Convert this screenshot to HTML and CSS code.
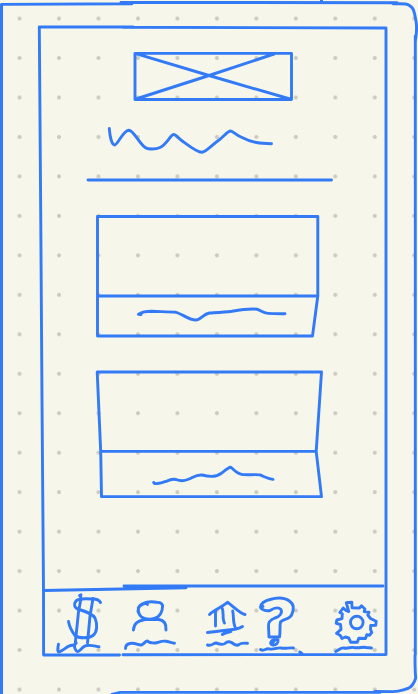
FILE: index.html
```html
<!DOCTYPE html>
<html lang="en">
<head>
<meta charset="utf-8">
<title>Wireframe</title>
<link rel="stylesheet" href="styles.css">
</head>
<body>
<main class="board">
  <svg class="frame" viewBox="0 0 418 694" aria-hidden="true">
    <path class="edge" d="M1.5 4.5V694"/>
    <path d="M2 4.4L132 3.8M121 2.4L397 2.7M321.500 0V1.500M393 3.800C399 3.800 403 3.600 405.500 4C409 4.500 412 7 413.500 10C414.500 13 415.300 16.700 416 21C417.500 30 416 36 415.300 41.700M415.300 36V655M415 655C415 663 415 672 415.700 678C414 684 411 687 408 688.500C402 690 400 691.500 393 691.600L375 691.500M380 692.400H120L112 694.500"/>
    <path d="M39.300 27H133M123 27.200L386 28V654.500L123 654.800M119.500 655H43.600L43.500 590L42 400L40.700 210L39.300 27"/>
  </svg>

  <section class="screen">
    <svg class="logo" viewBox="133 51 161 51" role="img" aria-label="Image placeholder">
      <path d="M135 53.400H291.500V99.500H135ZM135 53.400L209 75.500L290 99M136 99L209 75.500L274 54"/>
    </svg>
    <svg class="title" viewBox="107 127 167 28" role="img" aria-label="Heading">
      <path d="M109.300 128.500C109.800 135 111.500 144.500 114.500 145C118 145 123 130 129 130.200C134 131 139 143 145 147.300C148 149.700 156 149.500 160 147.500C166 145 171 134.500 173.500 134.500C176 134.500 178 138 181 140C188 145 197 152.500 202 152.300C207 151.500 213 144 219 140C224 136 228 131 230.500 131C233 131 236 135 241 137C252 143 261 143.500 271.500 143.700"/>
    </svg>
    <svg class="divider" viewBox="86 178 247 4" aria-hidden="true"><path d="M88 180H331.500"/></svg>

    <svg class="card" viewBox="95 214 226 124" role="img" aria-label="Card">
      <path d="M97.500 216.500H317.800V296L312.500 336H97.500ZM97.500 296H317.800"/>
      <path d="M138.500 314.300L141 314.600M139 314C142 312 147 311.300 152 311.300C160 311.700 169 311.700 176 312.300C182 313.500 188 320 196 320C201 320 203 314 209.500 313C218 312.500 224 312.300 232 311.200C242 309.500 250 308.500 257 309.200C261 310.500 263 313.300 268 313.400C274 313.800 279 313.700 285 313.700"/>
    </svg>
    <svg class="card card-second" viewBox="95 370 229 129" role="img" aria-label="Card">
      <path d="M97.200 372H321.500L316.200 451.400L321.500 496.600H101.500L100.700 451.400ZM100.700 451.400H316.200"/>
      <path d="M153.700 482.500C154 484.500 160 483.500 165 481.700C169 480.500 172 478.200 176 479.500C180 481 185 481 189 479C193 477.500 196 474.500 202 475C208 476.500 216 477.500 221 473.500C225 471 228 467.500 230.300 467.200C233 468 236 474 243 474.600C249 475 256 474.300 260 474.900C265 477 268 478.800 273 479.400"/>
    </svg>
  </section>

  <nav class="tabs">
    <svg class="tabs-line" viewBox="43 584 343 8" aria-hidden="true"><path d="M43.500 590.500L186 587.700M124 586H383"/></svg>
    <div class="tab-row">
      <svg class="tab tab-money" viewBox="56 592 46 62" role="img" aria-label="Money">
        <path d="M79.500 595.500L81 594.800M80.700 596V600L78.500 612L75.300 643M93 598.500L90 616L87.500 643"/>
        <path d="M100.500 602.500C99 599.500 96 598.800 92 599C85 598.500 78 598.500 76 601C73.500 604 74 608 79 609.500C87 612 93 614 95 618C97.500 624 97.500 632 93 635.500C89 638.500 79 638.500 75 635.500C71.500 631 69.500 627 68.500 621.500"/>
        <path d="M58.500 644.300C58 648 56.500 651.500 58.800 652C64 650.500 67 645.500 72 645.200C75 645.300 77.500 642 75.500 643C73 647 76 651.500 78 651.500C80 651.500 83 645.500 87 645.500C92 644.800 95 646.200 99 646.700"/>
      </svg>
      <svg class="tab tab-user" viewBox="123 592 54 62" role="img" aria-label="Profile">
        <path d="M147.500 604.500L147 603.300C144 603 142 604.500 139.700 606C137 610 138.500 614 141.500 617C146 619.800 153 619.800 156.500 617.500C160 616 162.500 611 162.500 607C163 604 161 602.500 157 602.200C151 601.300 146 602 143 603.500C140.500 604.500 139 606 138.300 608"/>
        <path d="M133.400 630C134 623 138 621 145 619.500L159 619.500C164.500 620.500 166.500 624 166 630"/>
        <path d="M125.500 648.500C125.500 645 128 643.700 131 643.300C135 642.500 138 645.300 141.500 645C145 643.500 145 640.800 147.500 641C149 642.800 152 643 155 643C159 642.500 161 640.500 166 641.300C169 641.800 172 643.200 174.500 643.200"/>
      </svg>
      <svg class="tab tab-bank" viewBox="205 592 44 62" role="img" aria-label="Bank">
        <path d="M209.500 614.500C214 610 223 606.500 227.500 602.300C233 606 240 613.500 245 614.500M215.500 610.500V626M222.300 608.500C224 613 222 619 224.500 623M232.700 611C234 616 232.500 622 235.500 628M207.500 632.500C219 631.500 231 629.500 236 629C238 628.500 241 627.500 242.500 626.500M222.300 634.500C225 632.500 229 632.500 231 631.500"/>
        <path d="M207.500 645C212 646.500 213 643 216 643C219 644 223 645.200 225 643.500C227 641.500 229.500 641.500 231.500 642.500C234 644.500 236.500 646.500 239 644.500C241 642.700 245 643 247.500 643.300"/>
      </svg>
      <svg class="tab tab-help" viewBox="258 592 46 62" role="img" aria-label="Help">
        <path d="M263 606.500L260.500 607.500C262 610.500 267 611 270 610.500C274 608 278 606.500 281 609.500C282.500 613 280 616.500 275 618C270 620 268 622 268.500 626L269 637H279.500C280.500 632 279.500 626 280.500 622C284 618 290 620 292 614C294 609 293.500 604 290 601.500C285 597.500 277 597.500 270 599.500C264 601 261 604 260.500 607"/>
        <path d="M274 639.500C270 641 269.500 645 273 645C276 645.300 278.500 643 278 640C276.500 638.500 274.500 640 273 642.500"/>
        <path d="M260.500 649.500C264 652 266 647.500 269.500 649C275 649.800 277 647.300 281 648C286 648.800 289 647.500 293.500 648M299.700 652L302 653.500"/>
      </svg>
      <svg class="tab tab-settings" viewBox="333 592 46 62" role="img" aria-label="Settings">
        <path d="M346.300 602.700L351.800 602.200L352 607.700L359.500 608L361.500 605.800L365 609L364.200 611.500L369 612.300L367.800 615L370.500 618.500L376.200 621.300L375.700 625.300L370.700 625.500L370.500 629.500L371.800 632.300L369.700 635.200L366.800 634.800L365.500 638.500L358.800 638.300L357.300 642.300L350.800 642.300L348.700 638L345.300 637L342 638.500L340.300 635.500L336.500 633.300L341 629.300L340.500 624.500L336.200 623.300L336.800 620L342 618.700L342.300 613.800L339.800 612.500L343.200 608L346.200 610.700L348.700 611.500Z"/>
        <circle cx="356.800" cy="622.500" r="6.300"/>
        <path d="M335.800 651.500C339 650 341 647.300 344 648C348 649 351 646.500 354 647.600C359 648.500 363 646.500 366 647.500L371.500 648"/>
      </svg>
    </div>
  </nav>
</main>
</body>
</html>
```
FILE: styles.css
```css
* {
  box-sizing: border-box;
}

body {
  margin: 0;
  font-family: "Liberation Sans", sans-serif;
}

.board {
  position: relative;
  display: flex;
  flex-direction: column;
  width: 418px;
  height: 694px;
  overflow: hidden;
  background-color: #f6f6ea;
  background-image: radial-gradient(circle at center, #cbcbc0 1.6px, transparent 2.3px);
  background-size: 39.47px 39.47px;
  background-position: -0.2px -1.2px;
}

svg {
  display: block;
  flex: none;
  overflow: visible;
  fill: none;
  stroke: #327af6;
  stroke-width: 2.9;
  stroke-linecap: round;
  stroke-linejoin: round;
}

.frame {
  position: absolute;
  inset: 0;
  width: 418px;
  height: 694px;
}

.edge {
  stroke-width: 3;
}

.screen {
  display: flex;
  flex-direction: column;
  height: 584px;
  padding-top: 51px;
}

.logo {
  width: 161px;
  height: 51px;
  margin-left: 133px;
}

.title {
  width: 167px;
  height: 28px;
  margin: 25px 0 23px 107px;
}

.divider {
  width: 247px;
  height: 4px;
  margin-left: 86px;
}

.card {
  width: 226px;
  height: 124px;
  margin: 32px 0 0 95px;
}

.card-second {
  width: 229px;
  height: 129px;
}

.tabs {
  display: flex;
  flex-direction: column;
  width: 343px;
  height: 70px;
  margin-left: 43px;
}

.tabs-line {
  width: 343px;
  height: 8px;
}

.tab-row {
  display: flex;
  padding-left: 13px;
}

.tab {
  width: 46px;
  height: 62px;
}

.tab-user {
  width: 54px;
  margin-left: 21px;
}

.tab-bank {
  width: 44px;
  margin-left: 28px;
}

.tab-help {
  margin-left: 9px;
}

.tab-settings {
  margin-left: 29px;
}
```
